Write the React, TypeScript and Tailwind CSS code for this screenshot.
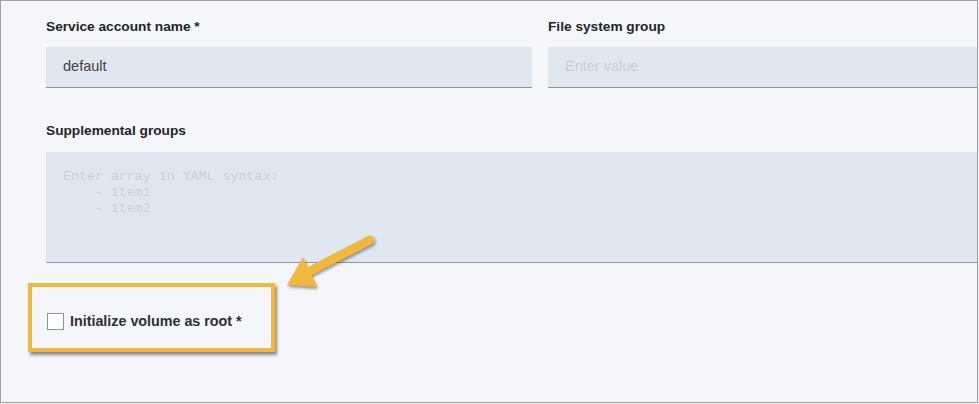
const Field = ({ label, value, placeholder }: { label: string; value?: string; placeholder?: string }) => (
  <div className="flex flex-col">
    <label className="h-4 text-[13.7px] font-bold leading-4 text-[#1f252d]">{label}</label>
    <div className="mt-3 flex h-[41px] items-center border-b border-[#8f96a0] bg-[#e1e7f0] px-[17px] text-[14.5px]">
      {value ? (
        <span className="text-[#3b424c]">{value}</span>
      ) : (
        <span className="text-[#c9ced6]">{placeholder}</span>
      )}
    </div>
  </div>
);

const App = () => {
  return (
    <div className="relative h-[404px] w-[979px] overflow-hidden bg-[#f4f6fa] font-['Liberation_Sans',Arial,sans-serif]">
      <div className="h-[403px] w-[978px] overflow-hidden border border-[#a0a0a0]">
        <div className="w-[1000px] pl-[45px] pt-[18px]">
          <div className="grid grid-cols-[486px_1fr] gap-x-4">
            <Field label="Service account name *" value="default" />
            <Field label="File system group" placeholder="Enter value" />
          </div>

          <div className="mt-[35px] flex flex-col">
            <label className="h-4 text-[13.7px] font-bold leading-4 text-[#1f252d]">Supplemental groups</label>
            <div className="mt-[13px] h-[111px] border-b border-[#8f96a0] bg-[#e1e7f0] px-[17px] pt-[17px]">
              <pre className="font-['Liberation_Mono',monospace] text-[13.3px] leading-4 text-[#cbd0d8]">
{`Enter array in YAML syntax:
    - item1
    - item2`}
              </pre>
            </div>
          </div>

          <div className="mt-[48px] flex items-center gap-[6px] pl-[1px]">
            <span className="block h-[17px] w-[17px] border-[1.5px] border-[#8e949c] bg-white" />
            <span className="text-[14.3px] font-bold text-[#2a3038]">Initialize volume as root *</span>
          </div>

          <div className="mt-[70px] border-t border-[#e2e5ea]" />
        </div>
      </div>

      {/* annotation overlay */}
      <div className="absolute left-[28px] top-[283px] h-[69px] w-[247px] border-[4.5px] border-[#f1b93b] shadow-[2px_3px_3px_rgba(0,0,0,0.45)]" />
      <svg
        className="absolute left-[270px] top-[225px]"
        width="120"
        height="75"
        viewBox="0 0 120 75"
        style={{ filter: "drop-shadow(1px 2px 1.5px rgba(0,0,0,0.4))" }}
      >
        <line x1="100" y1="15" x2="40" y2="46" stroke="#f1b93b" strokeWidth="9" strokeLinecap="round" />
        <polygon points="17,60 33,32 47,62" fill="#f1b93b" />
      </svg>
    </div>
  );
};

export default App;
